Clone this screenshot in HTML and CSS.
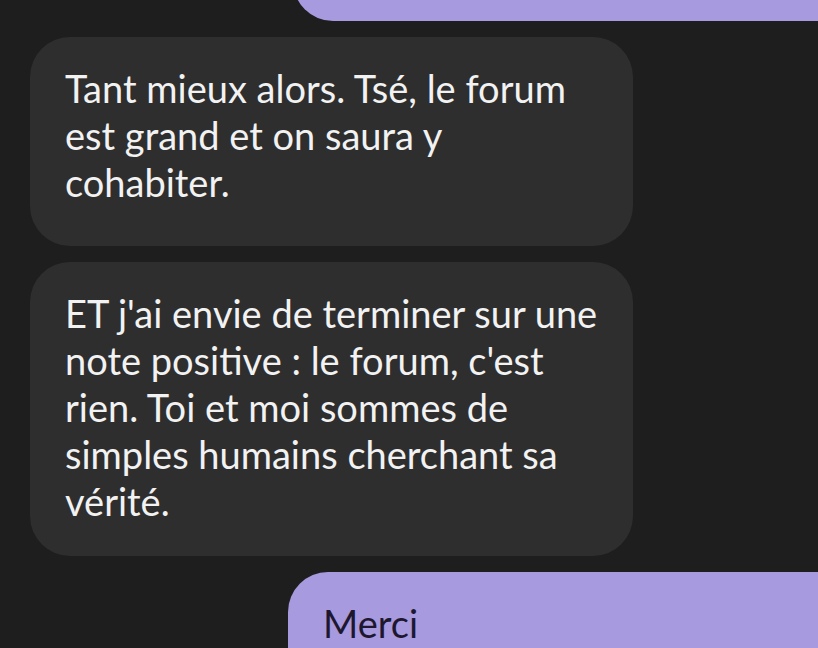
FILE: index.html
```html
<!DOCTYPE html>
<html lang="fr">
<head>
<meta charset="utf-8">
<link rel="stylesheet" href="styles.css">
</head>
<body>
<div class="chat">
  <div class="bubble out out-top"></div>
  <div class="bubble in in-first">Tant mieux alors. Tsé, le forum est grand et on saura y cohabiter.</div>
  <div class="bubble in in-second">ET j'ai envie de terminer sur une note positive : le forum, c'est rien. Toi et moi sommes de simples humains cherchant sa vérité.</div>
  <div class="bubble out out-bottom">Merci</div>
</div>
</body>
</html>
```
FILE: styles.css
```css
html, body {
  margin: 0;
  padding: 0;
  background: #1e1e1e;
  height: 100%;
  overflow: hidden;
}
.chat {
  display: flex;
  flex-direction: column;
  gap: 16px;
  font-family: Lato, "Noto Sans", sans-serif;
  font-weight: 400;
  font-size: 38px;
  line-height: 47px;
}
.bubble {
  box-sizing: border-box;
  border-radius: 40px;
}
.in {
  align-self: flex-start;
  margin-left: 30px;
  width: 603px;
  background: #2e2e2e;
  color: #f2f2f2;
  padding: 28px 35px 34px 35px;
}
.in-first { padding-bottom: 40px; }
.in-second { padding-bottom: 31px; }
.out {
  background: #a89ade;
  color: #1d1830;
  align-self: flex-end;
}
.out-top {
  margin-top: -60px;
  height: 81px;
  width: 525px;
  border-radius: 40px 0 0 40px;
}
.out-bottom {
  width: 530px;
  height: 76px;
  padding: 28px 35px 0 35px;
  border-radius: 40px 0 0 0;
}
```
